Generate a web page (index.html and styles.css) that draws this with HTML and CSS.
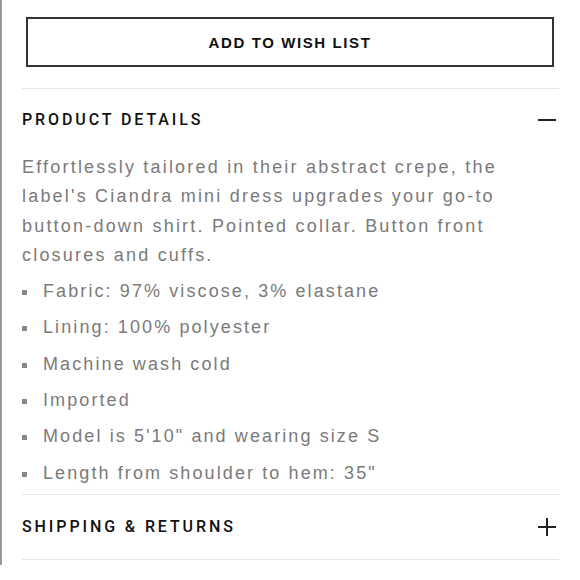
FILE: index.html
```html
<!DOCTYPE html>
<html>
<head>
<meta charset="utf-8">
<link rel="stylesheet" href="styles.css">
</head>
<body>
<div class="panel">
  <button class="wish-btn">ADD TO WISH LIST</button>
  <section class="acc acc-open">
    <div class="acc-head">
      <span class="acc-title">PRODUCT DETAILS</span>
      <span class="icon-minus"></span>
    </div>
    <div class="acc-body">
      <p class="desc">Effortlessly tailored in their abstract crepe, the label's Ciandra mini dress upgrades your go-to button-down shirt. Pointed collar. Button front closures and cuffs.</p>
      <ul class="facts">
        <li>Fabric: 97% viscose, 3% elastane</li>
        <li>Lining: 100% polyester</li>
        <li>Machine wash cold</li>
        <li>Imported</li>
        <li>Model is 5'10" and wearing size S</li>
        <li>Length from shoulder to hem: 35"</li>
      </ul>
    </div>
  </section>
  <section class="acc acc-last">
    <div class="acc-head">
      <span class="acc-title">SHIPPING &amp; RETURNS</span>
      <span class="icon-plus"></span>
    </div>
  </section>
</div>
</body>
</html>
```
FILE: styles.css
```css
html, body {
  margin: 0;
  padding: 0;
  background: #fff;
}
.panel {
  box-sizing: border-box;
  width: 580px;
  height: 565px;
  border-left: 2px solid #9a9a9a;
  padding: 17px 21px 0 20px;
  font-family: "Liberation Sans", Arial, sans-serif;
}
.wish-btn {
  display: block;
  box-sizing: border-box;
  width: 528px;
  height: 50px;
  margin: 0 0 21px 4px;
  border: 2px solid #333;
  background: #fff;
  font-family: "Liberation Sans", Arial, sans-serif;
  font-weight: 700;
  font-size: 15px;
  letter-spacing: 1.6px;
  color: #111;
  padding: 0;
}
.acc {
  border-top: 1px solid #e6e6e6;
}
.acc-last {
  border-bottom: 1px solid #e6e6e6;
}
.acc-head {
  display: flex;
  align-items: center;
  justify-content: space-between;
  height: 61px;
}
.acc-last .acc-head {
  height: 64px;
}
.acc-title {
  font-family: Roboto, "Liberation Sans", sans-serif;
  font-size: 16px;
  font-weight: 500;
  letter-spacing: 2.9px;
  color: #111;
}
.icon-minus {
  width: 18px;
  height: 2px;
  background: #222;
  margin-right: 3px;
}
.icon-plus {
  position: relative;
  width: 18px;
  height: 18px;
  margin-right: 3px;
}
.icon-plus::before,
.icon-plus::after {
  content: "";
  position: absolute;
  background: #222;
}
.icon-plus::before {
  left: 0;
  right: 0;
  top: 8px;
  height: 1.6px;
}
.icon-plus::after {
  top: 0;
  bottom: 0;
  left: 8px;
  width: 1.6px;
}
.acc-body {
  padding-bottom: 6px;
}
.desc {
  max-width: 515px;
  margin: 3px 0 0;
  font-size: 18px;
  line-height: 29.3px;
  letter-spacing: 2.2px;
  color: #7a7a7a;
}
.facts {
  list-style: none;
  margin: 7px 0 0;
  padding: 0;
}
.facts li {
  position: relative;
  padding-left: 21px;
  font-size: 18px;
  line-height: 29.3px;
  letter-spacing: 2.1px;
  color: #7a7a7a;
  margin-bottom: 7px;
}
.facts li:last-child {
  margin-bottom: 0;
}
.facts li::before {
  content: "";
  position: absolute;
  left: 0;
  top: 13px;
  width: 5px;
  height: 5px;
  background: #888;
}
```
